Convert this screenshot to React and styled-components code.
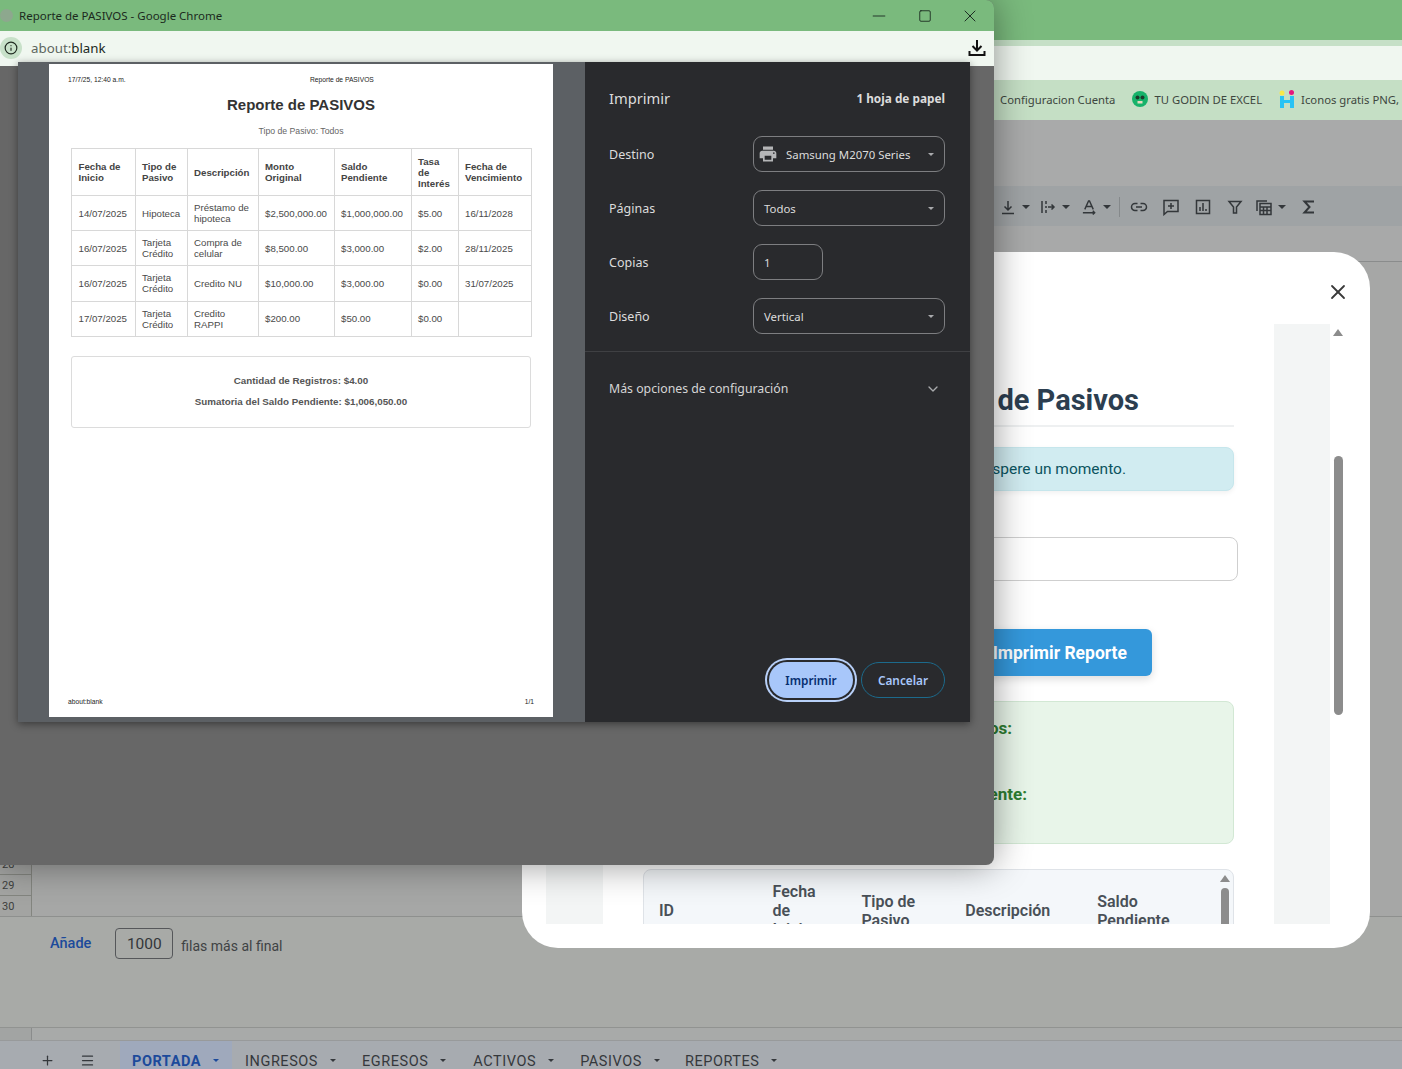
import React from 'react';
import styled, { createGlobalStyle } from 'styled-components';
import { Info, Minus, Square, X, ChevronDown, Plus, Menu } from 'lucide-react';
import { MdPrint } from 'react-icons/md';

const GlobalStyle = createGlobalStyle`
  html, body { margin: 0; padding: 0; background: #a9aaa9; }
  * { box-sizing: border-box; }
`;

const Desktop = styled.div`
  position: relative;
  width: 1402px;
  height: 1069px;
  overflow: hidden;
  display: flex;
  flex-direction: column;
  background: #a9aaa9;
  font-family: "Noto Sans", sans-serif;
`;

/* spreadsheet window behind everything */
const GreenBar = styled.div`
  height: 40px;
  flex: none;
  background: #7aba7d;
`;
const GreenStrip = styled.div`
  height: 6px;
  flex: none;
  background: #c6e0c7;
`;
const AddressBand = styled.div`
  height: 34px;
  flex: none;
  background: #f0f7f0;
`;
const Bookmarks = styled.div`
  height: 40px;
  flex: none;
  display: flex;
  align-items: center;
  padding: 0 0 2px 1000px;
  background: #c5dfc5;
  color: #3d463e;
  font-size: 11.3px;
  white-space: nowrap;
  overflow: hidden;
`;
const Bookmark = styled.span`
  display: flex;
  align-items: center;
  gap: 6px;
  margin-right: 17px;
`;
const SheetHead = styled.div`
  height: 66px;
  flex: none;
  background: #a9aaaa;
`;
const Toolbar = styled.div`
  height: 40px;
  flex: none;
  display: flex;
  align-items: center;
  padding: 2px 0 0 999px;
  background: #9fa3a5;
  color: #33373a;
`;
const ToolBtn = styled.span`
  display: flex;
  align-items: center;
  justify-content: ${p => (p.$caret ? 'flex-start' : 'center')};
  gap: 5px;
  width: ${p => p.$w}px;
  padding-left: ${p => p.$pad || 0}px;
  flex: none;
`;
const ToolDivider = styled.span`
  width: 1px;
  height: 20px;
  margin: 0 3px 0 0;
  background: #85898b;
  flex: none;
`;
const Caret = styled.span`
  width: 0;
  height: 0;
  flex: none;
  border-left: ${p => p.$size || 4}px solid transparent;
  border-right: ${p => p.$size || 4}px solid transparent;
  border-top: ${p => p.$size || 4}px solid ${p => p.$color || 'currentColor'};
`;
const FormulaBand = styled.div`
  height: 36px;
  flex: none;
  background: #a8a9a9;
  border-bottom: 1px solid #8a8c8c;
`;
const Grid = styled.div`
  height: 655px;
  flex: none;
  display: flex;
  flex-direction: column;
  justify-content: flex-end;
  border-bottom: 1px solid #8e908e;
  background: #a6a7a6;
`;
const RowHead = styled.div`
  width: 32px;
  height: 21px;
  display: flex;
  align-items: center;
  padding-left: 2px;
  border-top: 1px solid #83857f;
  border-right: 1px solid #83857f;
  background: #a3a4a2;
  color: #3d3f3d;
  font-family: "Roboto", sans-serif;
  font-size: 11px;
`;
const AddRows = styled.div`
  height: 111px;
  flex: none;
  display: flex;
  align-items: flex-start;
  padding: 11px 0 0 50px;
  font-family: "Roboto", sans-serif;
  background: #a8aaa7;
  border-bottom: 1px solid #919391;
`;
const AddLink = styled.span`
  margin-top: 7px;
  color: #1c4a9b;
  font-size: 14.5px;
  font-weight: 500;
`;
const RowCount = styled.span`
  width: 58px;
  height: 31px;
  margin: 0 8px 0 24px;
  display: flex;
  align-items: center;
  justify-content: center;
  border: 1px solid #55575a;
  border-radius: 4px;
  color: #33363a;
  font-size: 15.5px;
`;
const AddText = styled.span`
  margin-top: 10px;
  color: #3f4244;
  font-size: 14px;
`;
const HScroll = styled.div`
  height: 13px;
  flex: none;
  display: flex;
  background: #a8aaa9;
  border-bottom: 1px solid #989a9b;
`;
const HScrollCorner = styled.div`
  width: 32px;
  height: 12px;
  border-right: 1px solid #8a8c8c;
  background: #a2a4a3;
`;
const Tabs = styled.div`
  height: 28px;
  flex: none;
  display: flex;
  padding-left: 40px;
  background: #a7abb0;
  color: #35383c;
  font-family: "Roboto", sans-serif;
`;
const TabTool = styled.span`
  width: ${p => p.$w}px;
  flex: none;
  display: flex;
  align-items: flex-start;
  padding-top: 12px;
`;
const Tab = styled.span`
  display: flex;
  gap: 12px;
  height: 28px;
  padding: 12px 13px 0 12px;
  margin-right: ${p => p.$gap || 0}px;
  background: ${p => (p.$active ? '#9fa9bc' : 'transparent')};
  color: ${p => (p.$active ? '#1c4a9b' : 'inherit')};
  font-size: 14.5px;
  font-weight: ${p => (p.$active ? 700 : 400)};
  letter-spacing: 0.55px;
  white-space: nowrap;
  & > i { margin-top: 6px; }
`;

/* modal of the app, on top of the sheet */
const Modal = styled.div`
  position: absolute;
  left: 522px;
  top: 252px;
  width: 848px;
  height: 696px;
  display: flex;
  flex-direction: column;
  padding: 0 24px;
  background: #fff;
  border-radius: 36px;
  font-family: "Roboto", sans-serif;
`;
const ModalHead = styled.div`
  height: 72px;
  flex: none;
  display: flex;
  justify-content: flex-end;
  align-items: center;
  padding-top: 8px;
  margin-right: -4px;
  color: #3a3a3a;
`;
const ModalBody = styled.div`
  height: 600px;
  flex: none;
  display: grid;
  grid-template-columns: 57px 671px 56px 16px;
  overflow: hidden;
`;
const SideStrip = styled.div`
  background: #f3f5f5;
`;
const Content = styled.div`
  padding: 59px 40px 0;
`;
const Heading = styled.h2`
  margin: 0 0 20px;
  padding: 0 95px 8px 0;
  border-bottom: 2px solid #eef0f1;
  text-align: right;
  color: #2c3e50;
  font-size: 29px;
  line-height: 34px;
  font-weight: 700;
  white-space: nowrap;
`;
const Alert = styled.div`
  height: 44px;
  padding: 0 107px 1px 0;
  display: flex;
  align-items: center;
  justify-content: flex-end;
  background: #d1ecf1;
  border: 1px solid #c6e6ec;
  border-radius: 8px;
  box-shadow: 0 2px 5px rgba(0, 0, 0, 0.06);
  color: #0c5460;
  font-size: 15.5px;
`;
const Search = styled.div`
  height: 44px;
  margin: 46px -4px 48px 0;
  border: 1px solid #cfcfcf;
  border-radius: 8px;
`;
const ReportButton = styled.div`
  width: 200px;
  height: 47px;
  margin: 0 82px 25px auto;
  padding-right: 25px;
  display: flex;
  align-items: center;
  justify-content: flex-end;
  background: #3498db;
  border-radius: 6px;
  box-shadow: 0 3px 8px rgba(0, 0, 0, 0.14);
  color: #fff;
  font-size: 17.5px;
  font-weight: 700;
`;
const Totals = styled.div`
  height: 143px;
  margin-bottom: 25px;
  padding-top: 16px;
  background: #e8f5e9;
  border: 1px solid #d2e8d4;
  border-radius: 8px;
`;
const TotalLabel = styled.div`
  height: 66px;
  padding-right: ${p => p.$inset}px;
  text-align: right;
  color: #2e7d32;
  font-size: 17px;
  font-weight: 700;
  line-height: 20px;
`;
const RecordsBox = styled.div`
  display: flex;
  height: 130px;
  border: 1px solid #dfe3e8;
  border-radius: 8px 8px 0 0;
  background: #f4f7fa;
  overflow: hidden;
`;
const RecordsTable = styled.table`
  flex: 1;
  border-collapse: collapse;
  table-layout: fixed;
  height: 81px;
`;
const RecordsCol = styled.col`
  width: ${p => p.$w}px;
`;
const RecordsHead = styled.th`
  padding: 0 16px 0 15px;
  text-align: left;
  color: #495057;
  font-size: 16px;
  line-height: 19px;
  font-weight: 600;
`;
const ScrollTrack = styled.div`
  display: flex;
  flex-direction: column;
  align-items: center;
  width: ${p => p.$w}px;
  flex: none;
  padding: ${p => p.$pad}px 0;
  color: #8c8c8c;
`;
const ArrowUp = styled.span`
  width: 0;
  height: 0;
  flex: none;
  border-left: 5px solid transparent;
  border-right: 5px solid transparent;
  border-bottom: 7px solid #8c8c8c;
`;
const ArrowDown = styled(ArrowUp)`
  margin-top: auto;
  border-bottom: 0;
  border-top: 7px solid #8c8c8c;
`;
const Thumb = styled.span`
  width: ${p => p.$w}px;
  height: ${p => p.$h}px;
  flex: none;
  margin-top: ${p => p.$top}px;
  background: #8c8c8c;
  border-radius: 5px;
`;

/* chrome popup with the print dialog */
const Popup = styled.div`
  position: absolute;
  left: 0;
  top: 0;
  width: 994px;
  height: 865px;
  background: #676767;
  border-radius: 0 8px 8px 0;
  box-shadow: 0 0 36px rgba(0, 0, 0, 0.42);
  overflow: hidden;
`;
const TitleBar = styled.div`
  height: 31px;
  display: flex;
  align-items: center;
  background: #7aba7d;
  color: #1c2a1d;
  font-size: 11.5px;
`;
const FavIcon = styled.span`
  width: 13px;
  height: 13px;
  margin: 0 6px 0 0;
  border-radius: 50%;
  background: #8da88e;
  flex: none;
`;
const WinButtons = styled.div`
  margin-left: auto;
  display: flex;
  align-items: center;
  padding-right: 1px;
  color: #14201a;
`;
const WinBtn = styled.span`
  width: 45.5px;
  display: flex;
  justify-content: center;
`;
const UrlBar = styled.div`
  height: 35px;
  display: flex;
  align-items: center;
  padding-bottom: 1px;
  background: #f0f7f0;
  font-size: 13.3px;
`;
const InfoBadge = styled.span`
  width: 22px;
  height: 22px;
  margin-right: 9px;
  display: flex;
  align-items: center;
  justify-content: center;
  border-radius: 50%;
  background: #c8e1c9;
  color: #1f2a20;
  flex: none;
`;
const UrlScheme = styled.span`
  color: #5d665e;
`;
const UrlPath = styled.span`
  color: #1c2a1d;
`;
const Download = styled.span`
  margin-left: auto;
  margin-right: 8px;
  display: flex;
`;

const PrintDialog = styled.div`
  position: absolute;
  left: 18px;
  top: 62px;
  width: 952px;
  height: 660px;
  display: flex;
  box-shadow: 0 2px 8px rgba(0, 0, 0, 0.45);
`;
const PreviewArea = styled.div`
  width: 567px;
  flex: none;
  padding: 2px 0 0 31px;
  background: #5c6064;
`;
const Sheet = styled.div`
  width: 504px;
  height: 653px;
  display: flex;
  flex-direction: column;
  padding: 12px 19px 11px 19px;
  background: #fff;
  color: #4a4a4a;
  font-family: "Liberation Sans", Arial, sans-serif;
`;
const SheetMargin = styled.div`
  display: grid;
  grid-template-columns: ${p => p.$cols};
  color: #222;
  font-size: 6.7px;
  line-height: 8px;
  margin-top: ${p => (p.$bottom ? 'auto' : 0)};
`;
const ReportTitle = styled.h1`
  margin: 10.500px 0 0;
  text-align: center;
  color: #333;
  font-size: 15px;
  line-height: 20px;
  font-weight: 700;
`;
const ReportSub = styled.p`
  margin: 11.500px 0 0;
  text-align: center;
  color: #666;
  font-size: 8.7px;
  line-height: 11px;
`;
const ReportTable = styled.table`
  width: 459.500px;
  margin: 11px 0 0 3px;
  border-collapse: collapse;
  table-layout: fixed;
  font-size: 9.7px;
  line-height: 11px;
`;
const ReportCol = styled.col`
  width: ${p => p.$w}px;
`;
const ReportHeadRow = styled.tr`
  height: 47px;
`;
const ReportRow = styled.tr`
  height: 35.2px;
`;
const ReportTh = styled.th`
  padding: 0 6px 0 6.500px;
  border: 1px solid #d8d8d8;
  text-align: left;
  color: #444;
  font-weight: 700;
`;
const ReportTd = styled.td`
  padding: 0 2px 0 6.500px;
  border: 1px solid #d8d8d8;
  white-space: pre-line;
`;
const SummaryBox = styled.div`
  width: 460px;
  height: 72px;
  margin: 19px 0 0 3px;
  padding-top: 18px;
  border: 1px solid #dcdcdc;
  border-radius: 3px;
  text-align: center;
  color: #555;
  font-size: 9.8px;
  font-weight: 700;
`;
const SummaryLine = styled.p`
  margin: 0 0 10px;
  line-height: 11px;
`;

const SettingsPane = styled.div`
  flex: 1;
  display: flex;
  flex-direction: column;
  background: #292a2d;
  color: #dcdcdc;
  font-size: 12.5px;
`;
const PaneHead = styled.div`
  height: 74px;
  flex: none;
  display: flex;
  align-items: center;
  justify-content: space-between;
  padding: 0 25px 2px 24px;
`;
const PaneTitle = styled.span`
  font-size: 14.7px;
`;
const SheetCount = styled.span`
  font-size: 11.8px;
  font-weight: 700;
`;
const Options = styled.div`
  display: grid;
  grid-template-columns: 144px 192px;
  grid-auto-rows: 36px;
  row-gap: 18px;
  align-items: center;
  padding: 0 0 17px 24px;
  border-bottom: 1px solid #3f4043;
`;
const Select = styled.div`
  height: 36px;
  display: flex;
  align-items: center;
  gap: 8px;
  width: ${p => p.$w || '192px'};
  padding: 0 10px 0 ${p => (p.$icon ? 4 : 10)}px;
  border: 1px solid #7d7e81;
  border-radius: 9px;
  font-size: 11.4px;
  white-space: nowrap;
  & > i { margin-left: auto; }
`;
const MoreRow = styled.div`
  height: 73px;
  flex: none;
  display: flex;
  align-items: center;
  justify-content: space-between;
  padding: 0 29px 0 24px;
  color: #d5d5d5;
  font-size: 12.3px;
`;
const Actions = styled.div`
  margin-top: auto;
  display: flex;
  justify-content: flex-end;
  gap: 8px;
  padding: 0 25px 24px 0;
  font-size: 11.8px;
`;
const PrimaryBtn = styled.span`
  width: 84px;
  height: 36px;
  display: flex;
  align-items: center;
  justify-content: center;
  border-radius: 18px;
  background: #a8c7fa;
  box-shadow: 0 0 0 2px #292a2d, 0 0 0 4px #b8d0f8;
  color: #062e6f;
  font-weight: 600;
`;
const GhostBtn = styled.span`
  width: 84px;
  height: 36px;
  display: flex;
  align-items: center;
  justify-content: center;
  border-radius: 18px;
  border: 1px solid #1c6a8c;
  color: #a8c7fa;
  font-weight: 600;
`;

const PREVIEW_COLS = [63.5, 52, 71, 76, 77, 47, 73];
const PREVIEW_HEAD = ['Fecha de\nInicio', 'Tipo de\nPasivo', 'Descripción', 'Monto\nOriginal', 'Saldo\nPendiente', 'Tasa\nde\nInterés', 'Fecha de\nVencimiento'];
const PREVIEW_ROWS = [
  ['14/07/2025', 'Hipoteca', 'Préstamo de\nhipoteca', '$2,500,000.00', '$1,000,000.00', '$5.00', '16/11/2028'],
  ['16/07/2025', 'Tarjeta\nCrédito', 'Compra de\ncelular', '$8,500.00', '$3,000.00', '$2.00', '28/11/2025'],
  ['16/07/2025', 'Tarjeta\nCrédito', 'Credito NU', '$10,000.00', '$3,000.00', '$0.00', '31/07/2025'],
  ['17/07/2025', 'Tarjeta\nCrédito', 'Credito\nRAPPI', '$200.00', '$50.00', '$0.00', ''],
];
const SHEET_TABS = [
  { name: 'INGRESOS', gap: 1 },
  { name: 'EGRESOS', gap: 2 },
  { name: 'ACTIVOS', gap: 1 },
  { name: 'PASIVOS', gap: 0 },
  { name: 'REPORTES', gap: 0 },
];

const Stroke = ({ size = 18, children }) => (
  <svg width={size} height={size} viewBox="0 0 18 18" fill="none" stroke="currentColor" strokeWidth="1.5">
    {children}
  </svg>
);

function SheetToolbar() {
  return (
    <Toolbar>
      <ToolBtn $w={40} $caret>
        <Stroke><path d="M9 3v9M5.500 8.500 9 12l3.500-3.500M3 15.500h12" /></Stroke>
        <Caret />
      </ToolBtn>
      <ToolBtn $w={42} $caret>
        <Stroke><path d="M3 3v12M7 3v3M7 8v2M7 12v3M9 9h6M12.500 6.500 15 9l-2.500 2.500" /></Stroke>
        <Caret />
      </ToolBtn>
      <ToolBtn $w={38} $caret>
        <Stroke size={17}><path d="M4 11 8 2h1l4 9M5.500 8h6M2 14.500h12M12.500 12.500l2 2-2 2" /></Stroke>
        <Caret />
      </ToolBtn>
      <ToolDivider />
      <ToolBtn $w={32}>
        <Stroke><path d="M7.500 5.500H5a3.500 3.500 0 0 0 0 7h2.500M10.500 5.500H13a3.500 3.500 0 0 1 0 7h-2.500M6 9h6" /></Stroke>
      </ToolBtn>
      <ToolBtn $w={32}>
        <Stroke><path d="M2 2.500h14v11H5.500L2 16.500zM9 5v6M6 8h6" /></Stroke>
      </ToolBtn>
      <ToolBtn $w={32}>
        <Stroke><path d="M2.500 2.500h13v13h-13zM6 13V9M9 13V5M12 13v-2" /></Stroke>
      </ToolBtn>
      <ToolBtn $w={32}>
        <Stroke><path d="M3 3.500h12L10.500 9v6h-3V9z" /></Stroke>
      </ToolBtn>
      <ToolBtn $w={46} $caret $pad={4}>
        <Stroke><path d="M2 13V3h10M5 5.500h11v11H5zM5 9h11M5 12.500h11M8.500 9v7.500M12 9v7.500" /></Stroke>
        <Caret />
      </ToolBtn>
      <ToolBtn $w={24}>
        <Stroke><path d="M14 3.500H4.500L9.500 9l-5 5.500H14" strokeWidth="2" /></Stroke>
      </ToolBtn>
    </Toolbar>
  );
}

function AppModal() {
  return (
    <Modal>
      <ModalHead>
        <X size={24} strokeWidth={1.8} />
      </ModalHead>
      <ModalBody>
        <SideStrip />
        <Content>
          <Heading>Generar Reporte de Pasivos</Heading>
          <Alert>Generando reporte. Espere un momento.</Alert>
          <Search />
          <ReportButton>Imprimir Reporte</ReportButton>
          <Totals>
            <TotalLabel $inset={221}>Cantidad de Registros:</TotalLabel>
            <TotalLabel $inset={206}>Sumatoria del Saldo Pendiente:</TotalLabel>
          </Totals>
          <RecordsBox>
            <RecordsTable>
              <colgroup>
                <RecordsCol $w={114} />
                <RecordsCol $w={89} />
                <RecordsCol $w={104} />
                <RecordsCol $w={132} />
                <RecordsCol $w={135} />
              </colgroup>
              <thead>
                <tr>
                  <RecordsHead>ID</RecordsHead>
                  <RecordsHead>Fecha de Inicio</RecordsHead>
                  <RecordsHead>Tipo de Pasivo</RecordsHead>
                  <RecordsHead>Descripción</RecordsHead>
                  <RecordsHead>Saldo Pendiente</RecordsHead>
                </tr>
              </thead>
            </RecordsTable>
            <ScrollTrack $w={16} $pad={5}>
              <ArrowUp />
              <Thumb $w={8} $h={60} $top={6} />
            </ScrollTrack>
          </RecordsBox>
        </Content>
        <SideStrip />
        <ScrollTrack $w={16} $pad={5}>
          <ArrowUp />
          <Thumb $w={9} $h={259} $top={120} />
          <ArrowDown />
        </ScrollTrack>
      </ModalBody>
    </Modal>
  );
}

function PrintPreview() {
  return (
    <PreviewArea>
      <Sheet>
        <SheetMargin $cols="242px auto">
          <span>17/7/25, 12:40 a.m.</span>
          <span>Reporte de PASIVOS</span>
        </SheetMargin>
        <ReportTitle>Reporte de PASIVOS</ReportTitle>
        <ReportSub>Tipo de Pasivo: Todos</ReportSub>
        <ReportTable>
          <colgroup>
            {PREVIEW_COLS.map((w, i) => <ReportCol key={i} $w={w} />)}
          </colgroup>
          <thead>
            <ReportHeadRow>
              {PREVIEW_HEAD.map(h => (
                <ReportTh key={h}>
                  {h.split('\n').map(part => <div key={part}>{part}</div>)}
                </ReportTh>
              ))}
            </ReportHeadRow>
          </thead>
          <tbody>
            {PREVIEW_ROWS.map((row, r) => (
              <ReportRow key={r}>
                {row.map((cell, c) => <ReportTd key={c}>{cell}</ReportTd>)}
              </ReportRow>
            ))}
          </tbody>
        </ReportTable>
        <SummaryBox>
          <SummaryLine>Cantidad de Registros: $4.00</SummaryLine>
          <SummaryLine>Sumatoria del Saldo Pendiente: $1,006,050.00</SummaryLine>
        </SummaryBox>
        <SheetMargin $bottom $cols="1fr auto">
          <span>about:blank</span>
          <span>1/1</span>
        </SheetMargin>
      </Sheet>
    </PreviewArea>
  );
}

function PrintSettings() {
  return (
    <SettingsPane>
      <PaneHead>
        <PaneTitle>Imprimir</PaneTitle>
        <SheetCount>1 hoja de papel</SheetCount>
      </PaneHead>
      <Options>
        <span>Destino</span>
        <Select $icon>
          <MdPrint size={20} color="#b5b6b8" />
          Samsung M2070 Series
          <Caret as="i" $size={3.5} $color="#a9aaad" />
        </Select>
        <span>Páginas</span>
        <Select>Todos<Caret as="i" $size={3.5} $color="#a9aaad" /></Select>
        <span>Copias</span>
        <Select $w="70px">1</Select>
        <span>Diseño</span>
        <Select>Vertical<Caret as="i" $size={3.5} $color="#a9aaad" /></Select>
      </Options>
      <MoreRow>
        Más opciones de configuración
        <ChevronDown size={16} color="#a9aaad" />
      </MoreRow>
      <Actions>
        <PrimaryBtn>Imprimir</PrimaryBtn>
        <GhostBtn>Cancelar</GhostBtn>
      </Actions>
    </SettingsPane>
  );
}

function ChromePopup() {
  return (
    <Popup>
      <TitleBar>
        <FavIcon />
        Reporte de PASIVOS - Google Chrome
        <WinButtons>
          <WinBtn><Minus size={20} strokeWidth={1} /></WinBtn>
          <WinBtn><Square size={14} strokeWidth={1.4} /></WinBtn>
          <WinBtn><X size={20} strokeWidth={1.1} /></WinBtn>
        </WinButtons>
      </TitleBar>
      <UrlBar>
        <InfoBadge><Info size={14} strokeWidth={2} /></InfoBadge>
        <UrlScheme>about:</UrlScheme>
        <UrlPath>blank</UrlPath>
        <Download>
          <svg width="18" height="18" viewBox="0 0 18 18" fill="none" stroke="#111" strokeWidth="2">
            <path d="M9 1v10M4.500 7 9 11.500 13.500 7M1.500 12v4h15v-4" />
          </svg>
        </Download>
      </UrlBar>
      <PrintDialog>
        <PrintPreview />
        <PrintSettings />
      </PrintDialog>
    </Popup>
  );
}

export default function App() {
  return (
    <>
      <GlobalStyle />
      <Desktop>
        <GreenBar />
        <GreenStrip />
        <AddressBand />
        <Bookmarks>
          <Bookmark>Configuracion Cuenta</Bookmark>
          <Bookmark>
            <svg width="16" height="16" viewBox="0 0 16 16">
              <circle cx="8" cy="8" r="8" fill="#17b26a" />
              <circle cx="5.500" cy="6.500" r="2" fill="#1d3b2c" />
              <circle cx="10.500" cy="6.500" r="2" fill="#1d3b2c" />
              <rect x="5.500" y="10" width="5" height="2.500" fill="#e9d9c0" />
            </svg>
            TU GODIN DE EXCEL
          </Bookmark>
          <Bookmark>
            <svg width="16" height="18" viewBox="0 0 16 18">
              <circle cx="3" cy="3" r="2.500" fill="#f7e948" />
              <circle cx="12.500" cy="2.500" r="2.500" fill="#e6177e" />
              <path d="M1 6h4v4h6V6h4v12h-4v-5H5v5H1z" fill="#29c3f5" />
            </svg>
            Iconos gratis PNG,
          </Bookmark>
        </Bookmarks>
        <SheetHead />
        <SheetToolbar />
        <FormulaBand />
        <Grid>
          {[28, 29, 30].map(n => <RowHead key={n}>{n}</RowHead>)}
        </Grid>
        <AddRows>
          <AddLink>Añade</AddLink>
          <RowCount>1000</RowCount>
          <AddText>filas más al final</AddText>
        </AddRows>
        <HScroll><HScrollCorner /></HScroll>
        <Tabs>
          <TabTool $w={40}><Plus size={15} /></TabTool>
          <TabTool $w={40}><Menu size={15} /></TabTool>
          <Tab $active $gap={1}>PORTADA<Caret as="i" $size={3} /></Tab>
          {SHEET_TABS.map(t => (
            <Tab key={t.name} $gap={t.gap}>{t.name}<Caret as="i" $size={3} /></Tab>
          ))}
        </Tabs>
        <AppModal />
        <ChromePopup />
      </Desktop>
    </>
  );
}
